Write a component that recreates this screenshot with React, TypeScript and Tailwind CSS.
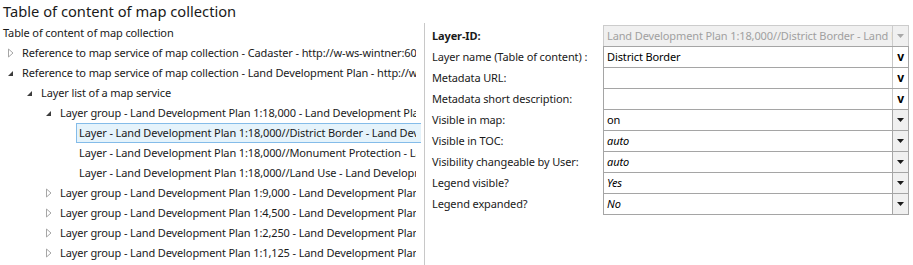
import React from "react";

type Node = {
  label: string;
  level: number;
  state: "open" | "closed" | "leaf";
  selected?: boolean;
};

const tree: Node[] = [
  { label: "Reference to map service of map collection - Cadaster - http://w-ws-wintner:6080/arcgis/rest/services", level: 0, state: "closed" },
  { label: "Reference to map service of map collection - Land Development Plan - http://w-ws-wintner:6080", level: 0, state: "open" },
  { label: "Layer list of a map service", level: 1, state: "open" },
  { label: "Layer group - Land Development Plan 1:18,000 - Land Development Plan", level: 2, state: "open" },
  { label: "Layer - Land Development Plan 1:18,000//District Border - Land Development Plan", level: 3, state: "leaf", selected: true },
  { label: "Layer - Land Development Plan 1:18,000//Monument Protection - Land Development Plan", level: 3, state: "leaf" },
  { label: "Layer - Land Development Plan 1:18,000//Land Use - Land Development Plan", level: 3, state: "leaf" },
  { label: "Layer group - Land Development Plan 1:9,000 - Land Development Plan", level: 2, state: "closed" },
  { label: "Layer group - Land Development Plan 1:4,500 - Land Development Plan", level: 2, state: "closed" },
  { label: "Layer group - Land Development Plan 1:2,250 - Land Development Plan", level: 2, state: "closed" },
  { label: "Layer group - Land Development Plan 1:1,125 - Land Development Plan", level: 2, state: "closed" },
];

type Field = {
  label: string;
  value: string;
  kind: "disabled" | "text" | "combo";
  bold?: boolean;
  italic?: boolean;
};

const fields: Field[] = [
  { label: "Layer-ID:", value: "Land Development Plan 1:18,000//District Border - Land Development Plan", kind: "disabled", bold: true },
  { label: "Layer name (Table of content) :", value: "District Border", kind: "text" },
  { label: "Metadata URL:", value: "", kind: "text" },
  { label: "Metadata short description:", value: "", kind: "text" },
  { label: "Visible in map:", value: "on", kind: "combo" },
  { label: "Visible in TOC:", value: "auto", kind: "combo", italic: true },
  { label: "Visibility changeable by User:", value: "auto", kind: "combo", italic: true },
  { label: "Legend visible?", value: "Yes", kind: "combo", italic: true },
  { label: "Legend expanded?", value: "No", kind: "combo", italic: true },
];

function Arrow({ state }: { state: Node["state"] }) {
  if (state === "closed") {
    return (
      <svg width="8" height="10" viewBox="0 0 8 10">
        <path d="M1.5 1 L6 5 L1.5 9 Z" fill="none" stroke="#a6a6a6" strokeWidth="1" />
      </svg>
    );
  }
  return (
    <svg width="8" height="10" viewBox="0 0 8 10">
      <path d="M6 3 L6 8 L1 8 Z" fill="#3c3c3c" />
    </svg>
  );
}

function DropArrow({ muted }: { muted?: boolean }) {
  return (
    <svg width="7" height="4" viewBox="0 0 7 4">
      <path d="M0 0 L7 0 L3.5 4 Z" fill={muted ? "#a8a8a8" : "#1a1a1a"} />
    </svg>
  );
}

export default function App() {
  return (
    <div
      className="w-[913px] h-[265px] overflow-hidden bg-white text-[#1a1a1a] text-[11px] tracking-[-0.12px]"
      style={{ fontFamily: '"Noto Sans", "Open Sans", sans-serif' }}
    >
      <div className="h-[23px] pl-[3px] text-[14.7px] leading-[23px] tracking-normal">
        Table of content of map collection
      </div>
      <div className="flex h-[242px]">
        {/* tree */}
        <div className="w-[421px] overflow-hidden">
          <div className="h-[20px] pl-[3px] leading-[20px]">Table of content of map collection</div>
          {tree.map((n, i) => (
            <div
              key={i}
              className="flex h-[20px] w-[416px] items-center"
              style={{ paddingLeft: 3 + n.level * 19 }}
            >
              {n.state === "leaf" ? (
                <div className="w-[16px] shrink-0" />
              ) : (
                <div className="flex w-[19px] shrink-0 items-center pl-[4px]">
                  <Arrow state={n.state} />
                </div>
              )}
              {n.state === "leaf" ? (
                <div
                  className={
                    n.selected
                      ? "flex-1 min-w-0 h-[20px] mr-[-10px] pr-[9px] pl-[2px] border border-[#84bce9] bg-[#e5f3fb] leading-[18px]"
                      : "flex-1 min-w-0 h-[20px] pl-[3px] leading-[20px]"
                  }
                >
                  <div className="overflow-hidden whitespace-nowrap">{n.label}</div>
                </div>
              ) : (
                <div className="flex-1 min-w-0 overflow-hidden whitespace-nowrap leading-[20px]">{n.label}</div>
              )}
            </div>
          ))}
        </div>

        {/* splitter */}
        <div className="ml-[3px] w-px bg-[#c8c8c8]" />

        {/* properties */}
        <div className="pl-[7px] pt-[2px]">
          {fields.map((f, i) => (
            <div key={i} className="flex h-[21px]">
              <div className={`w-[171px] leading-[21px] whitespace-nowrap ${f.bold ? "font-bold" : ""}`}>
                {f.label}
              </div>
              <div
                className={`flex w-[306px] border-l border-r border-t ${
                  i === fields.length - 1 ? "border-b h-[22px]" : ""
                } ${f.kind === "disabled" ? "border-[#cccccc] bg-[#f0f0f0]" : "border-[#a5a5a5] bg-white"}`}
              >
                <div
                  className={`flex-1 min-w-0 overflow-hidden whitespace-nowrap pl-[3px] leading-[19px] ${
                    f.kind === "disabled" ? "text-[#a0a0a0]" : "text-black"
                  } ${f.italic ? "italic" : ""}`}
                >
                  {f.value}
                </div>
                {f.kind === "text" ? (
                  <div className="flex w-[16px] items-center justify-center border-l border-[#c8c8c8] bg-white text-[12px] font-bold text-black leading-none">
                    v
                  </div>
                ) : (
                  <div
                    className={`flex w-[16px] items-center justify-center border-l ${
                      f.kind === "disabled" ? "border-[#cccccc] bg-[#f0f0f0]" : "border-[#a5a5a5] bg-[#f0f0f0]"
                    }`}
                  >
                    <DropArrow muted={f.kind === "disabled"} />
                  </div>
                )}
              </div>
            </div>
          ))}
        </div>
      </div>
    </div>
  );
}
